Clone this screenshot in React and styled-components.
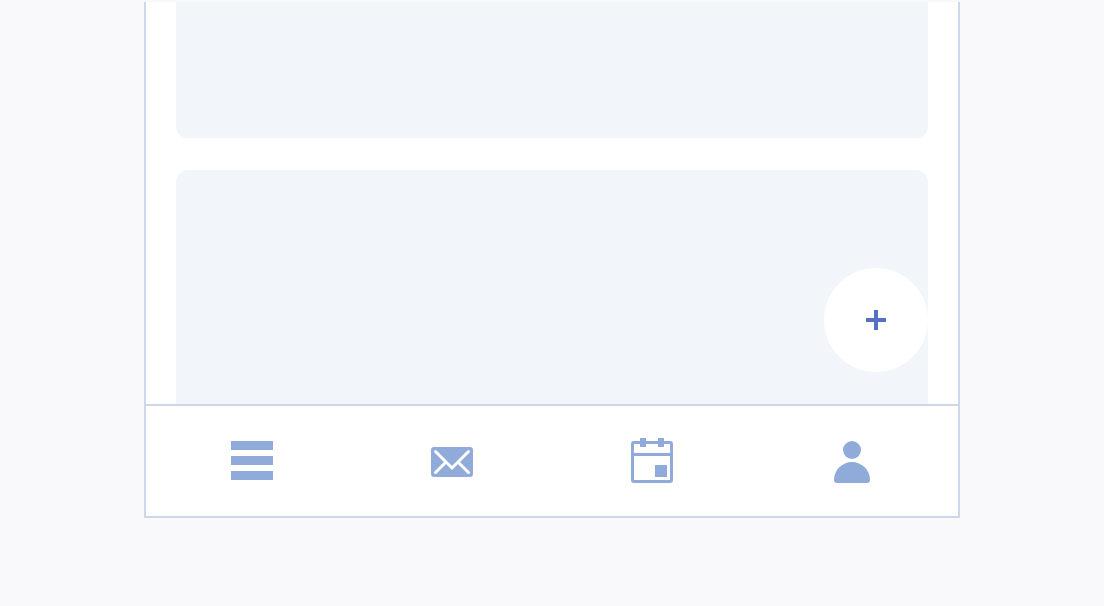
import React from 'react';
import styled, { createGlobalStyle } from 'styled-components';

const colors = {
    page: '#f9f9fb',
    surface: '#ffffff',
    card: '#f2f5fa',
    border: '#cfd7ea',
    icon: '#90aada',
    accent: '#5470c6',
};

const MenuIcon = () => (
    <Icon viewBox='0 0 48 48' aria-hidden='true'>
        <rect x='3' y='4' width='42' height='9' />
        <rect x='3' y='19' width='42' height='9' />
        <rect x='3' y='34' width='42' height='9' />
    </Icon>
);

const MailIcon = () => (
    <Icon viewBox='0 0 48 48' aria-hidden='true'>
        <rect x='3' y='10' width='42' height='30' rx='3' />
        <path
            d='M7.5 14.5L24 31L40.5 14.5M7.5 35.5L17.5 25.5M40.5 35.5L30.5 25.5'
            fill='none'
            stroke={colors.surface}
            strokeLinecap='round'
            strokeWidth='3'
        />
    </Icon>
);

const CalendarIcon = () => (
    <Icon viewBox='0 0 48 48' aria-hidden='true'>
        <rect x='4.5' y='5.5' width='39' height='39' rx='1.5' fill='none' stroke={colors.icon} strokeWidth='3' />
        <rect x='4' y='16' width='40' height='3' />
        <rect x='12' y='1' width='6' height='9' />
        <rect x='30' y='1' width='6' height='9' />
        <rect x='27' y='28' width='12' height='12' />
    </Icon>
);

const PersonIcon = () => (
    <Icon viewBox='0 0 48 48' aria-hidden='true'>
        <circle cx='24' cy='13' r='9' />
        <path d='M6 43A18 18 0 0 1 42 43A3 3 0 0 1 39 46H9A3 3 0 0 1 6 43Z' />
    </Icon>
);

const navItems = [
    { name: 'Menu', icon: MenuIcon },
    { name: 'Messages', icon: MailIcon },
    { name: 'Calendar', icon: CalendarIcon },
    { name: 'Profile', icon: PersonIcon },
];

const App = () => (
    <Page>
        <GlobalStyle />
        <Frame>
            <Feed>
                <Card edge='top' />
                <Card edge='bottom' />
                <AddButton type='button' aria-label='Add'>
                    <PlusIcon viewBox='0 0 20 20' aria-hidden='true'>
                        <path d='M8 0H12V8H20V12H12V20H8V12H0V8H8Z' />
                    </PlusIcon>
                </AddButton>
            </Feed>
            <Nav aria-label='Main'>
                { navItems.map(({ name, icon: ItemIcon }) => (
                    <NavButton key={name} type='button' aria-label={name}>
                        <ItemIcon />
                    </NavButton>
                ))}
            </Nav>
        </Frame>
    </Page>
);

const GlobalStyle = createGlobalStyle`
    * {
        box-sizing: border-box;
    }

    body {
        background-color: ${colors.page};
        font-family: 'Liberation Sans', sans-serif;
        margin: 0;
    }
`;

const Page = styled.div`
    min-height: 100vh;
    padding: 2px 16px 88px;
`;

const Frame = styled.main`
    background-color: ${colors.surface};
    border: 2px solid ${colors.border};
    border-top: none;
    margin: 0 auto;
    max-width: 816px;
`;

const Feed = styled.section`
    display: flex;
    flex-direction: column;
    gap: 32px;
    padding: 0 30px;
    position: relative;
`;

// The feed is scrolled, so the first card runs off the top and the last one under the nav.
const Card = styled.article.withConfig({ shouldForwardProp: prop => prop !== 'edge' })`
    background-color: ${colors.card};
    border-radius: ${props => props.edge === 'top' ? '0 0 12px 12px' : '12px 12px 0 0'};
    height: ${props => props.edge === 'top' ? 136 : 234}px;
`;

const AddButton = styled.button`
    align-items: center;
    background-color: ${colors.surface};
    border: none;
    border-radius: 50%;
    bottom: 32px;
    cursor: pointer;
    display: flex;
    height: 104px;
    justify-content: center;
    padding: 0;
    position: absolute;
    right: 30px;
    width: 104px;
`;

const PlusIcon = styled.svg`
    fill: ${colors.accent};
    height: 20px;
    width: 20px;
`;

const Nav = styled.nav`
    border-top: 2px solid ${colors.border};
    display: grid;
    grid-template-columns: repeat(4, 1fr);
    padding: 0 6px;
`;

const NavButton = styled.button`
    align-items: center;
    background: none;
    border: none;
    cursor: pointer;
    display: flex;
    height: 110px;
    justify-content: center;
    padding: 0;
`;

const Icon = styled.svg`
    display: block;
    fill: ${colors.icon};
    height: 48px;
    width: 48px;
`;

export default App;
